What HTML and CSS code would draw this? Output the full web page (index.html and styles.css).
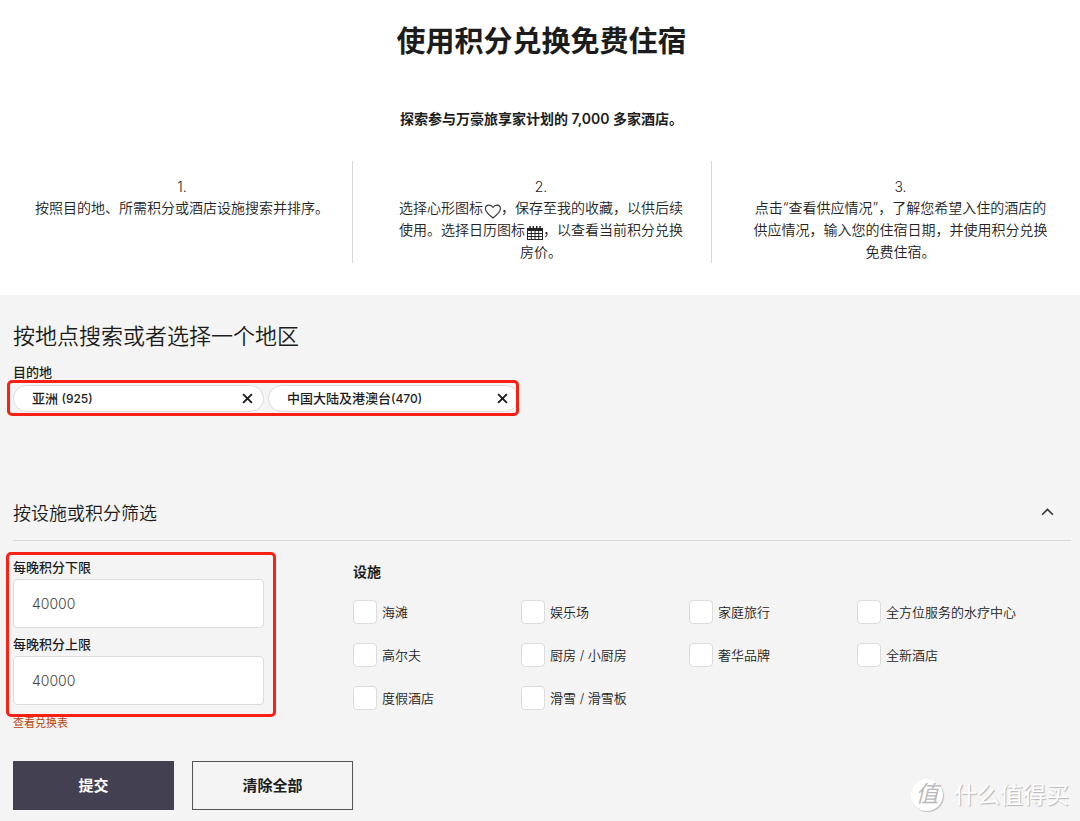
FILE: index.html
```html
<!DOCTYPE html>
<html lang="zh-CN">
<head>
<meta charset="utf-8">
<meta name="viewport" content="width=device-width, initial-scale=1">
<title>使用积分兑换免费住宿</title>
<link rel="stylesheet" href="styles.css">
</head>
<body>
<header class="intro">
  <h1 class="title">使用积分兑换免费住宿</h1>
  <p class="lead">探索参与万豪旅享家计划的 7,000 多家酒店。</p>
  <div class="steps">
    <div class="step">
      <div class="number">1.</div>
      <p>按照目的地、所需积分或酒店设施搜索并排序。</p>
    </div>
    <div class="step">
      <div class="number">2.</div>
      <p>选择心形图标<svg class="inline-icon" viewBox="0 0 18 16" aria-hidden="true"><path d="M10 15C6.600 12.100 2.400 9.200 2.400 5.700 2.400 3.600 4 2.100 6 2.100c1.700 0 3.200 1 4 2.500.8-1.500 2.300-2.500 4-2.500 2 0 3.400 1.500 3.400 3.600 0 3.500-4 6.400-7.400 9.300z" fill="none" stroke="#333" stroke-width="1.100" stroke-linejoin="round"/></svg>，保存至我的收藏，以供后续使用。选择日历图标<svg class="inline-icon" viewBox="0 0 18 16" aria-hidden="true"><path d="M2 3h16v12H2z" fill="#222"/><path d="M5 1v3M8.300 1v3M11.700 1v3M15 1v3" stroke="#222" stroke-width="1.500"/><path d="M3 6h2.800v2H3zM6.800 6h2.700v2H6.800zM10.500 6h2.700v2h-2.700zM14.200 6H17v2h-2.800zM3 9h2.800v2H3zM6.800 9h2.700v2H6.800zM10.500 9h2.700v2h-2.700zM14.200 9H17v2h-2.800zM3 12h2.800v2H3zM6.800 12h2.700v2H6.800zM10.500 12h2.700v2h-2.700zM14.200 12H17v2h-2.800z" fill="#fff"/></svg>，以查看当前积分兑换房价。</p>
    </div>
    <div class="step">
      <div class="number">3.</div>
      <p>点击“查看供应情况”，了解您希望入住的酒店的供应情况，输入您的住宿日期，并使用积分兑换免费住宿。</p>
    </div>
  </div>
</header>
<main class="search">
  <form class="form">
    <h2 class="region-title">按地点搜索或者选择一个地区</h2>
    <div class="label" id="destination">目的地</div>
    <div class="chips marked" role="group" aria-labelledby="destination">
      <div class="chip"><span>亚洲 <span class="count">(925)</span></span><button class="remove" type="button" aria-label="移除亚洲"><svg viewBox="0 0 10 10"><path d="M1 1l8 8M9 1L1 9"/></svg></button></div>
      <div class="chip"><span>中国大陆及港澳台<span class="count">(470)</span></span><button class="remove" type="button" aria-label="移除中国大陆及港澳台"><svg viewBox="0 0 10 10"><path d="M1 1l8 8M9 1L1 9"/></svg></button></div>
    </div>
    <div class="filter-head">
      <h2 class="filter-title">按设施或积分筛选</h2>
      <button class="toggle" type="button" aria-label="收起"><svg viewBox="0 0 12 8"><path d="M1 7l5-5 5 5"/></svg></button>
    </div>
    <div class="filters">
      <div class="points">
        <div class="fields marked">
          <label class="label" for="min">每晚积分下限</label>
          <input class="input" id="min" type="text" value="40000">
          <label class="label" for="max">每晚积分上限</label>
          <input class="input" id="max" type="text" value="40000">
        </div>
        <a class="chart-link" href="#">查看兑换表</a>
      </div>
      <fieldset class="amenities">
        <legend class="legend">设施</legend>
        <div class="options">
          <label class="option"><input type="checkbox">海滩</label>
          <label class="option"><input type="checkbox">娱乐场</label>
          <label class="option"><input type="checkbox">家庭旅行</label>
          <label class="option"><input type="checkbox">全方位服务的水疗中心</label>
          <label class="option"><input type="checkbox">高尔夫</label>
          <label class="option"><input type="checkbox">厨房 / 小厨房</label>
          <label class="option"><input type="checkbox">奢华品牌</label>
          <label class="option"><input type="checkbox">全新酒店</label>
          <label class="option"><input type="checkbox">度假酒店</label>
          <label class="option"><input type="checkbox">滑雪 / 滑雪板</label>
        </div>
      </fieldset>
    </div>
    <div class="actions">
      <button class="button primary" type="submit">提交</button>
      <button class="button" type="reset">清除全部</button>
    </div>
  </form>
  <div class="watermark"><span class="seal">值</span><span>什么值得买</span></div>
</main>
</body>
</html>
```
FILE: styles.css
```css
* { box-sizing: border-box; }
body {
  margin: 0;
  min-height: 100vh;
  display: flex;
  flex-direction: column;
  background: #fff;
  color: #1c1c1c;
  font: 350 14px/22px Inter, "Noto Sans CJK SC", sans-serif;
}
h1, h2, p { margin: 0; }
button, input { font: inherit; color: inherit; }

.intro { padding: 21px 9px 32px 12px; text-align: center; }
.title { font-size: 29px; line-height: 42px; font-weight: 700; }
.lead { margin-top: 45px; font-weight: 600; }
.steps {
  margin-top: 31px;
  display: grid;
  grid-template-columns: repeat(3, 1fr);
  column-gap: 18px;
}
.step { padding: 15px 22px 0; color: #222; }
.step:not(:last-child) { border-right: 1px solid #d8d8d8; }
.number { line-height: 21px; }
.inline-icon { width: 18px; height: 16px; vertical-align: -6px; }

.search { position: relative; flex: 1; background: #f4f4f4; }
.form { padding: 26px 9px 12px 13px; }
.region-title { font-size: 22px; line-height: 30px; font-weight: 350; }
.label { display: block; font-size: 13px; line-height: 20px; font-weight: 500; }
.form > .label { margin-top: 11px; }

/* Red frame that highlights a group of controls */
.marked { position: relative; }
.marked::after {
  content: "";
  position: absolute;
  inset: -5px -12px -12px -7px;
  border: 3px solid #fb2014;
  border-radius: 5px;
  pointer-events: none;
}
.chips { display: flex; gap: 4px; width: max-content; margin-top: 3px; }
.chips::after { inset: -5px 0 -4px -6px; }
.chip {
  width: 251px;
  height: 27px;
  padding: 0 10px 0 18px;
  display: flex;
  align-items: center;
  justify-content: space-between;
  background: #fff;
  border: 1px solid #dcdcdc;
  border-radius: 14px;
  font-size: 13px;
  font-weight: 500;
}
.count { font-size: 12px; }
.remove, .toggle { border: 0; padding: 0; background: none; display: flex; }
.remove svg { width: 11px; height: 11px; fill: none; stroke: #1c1c1c; stroke-width: 1.7; }

.filter-head {
  margin-top: 87px;
  padding: 0 17px 11px 0;
  display: flex;
  align-items: center;
  justify-content: space-between;
  border-bottom: 1px solid #d9d9d9;
}
.filter-title { font-size: 18px; line-height: 30px; font-weight: 350; }
.toggle { padding-bottom: 6px; }
.toggle svg { width: 13px; height: 9px; fill: none; stroke: #333; stroke-width: 1.5; }

.filters { display: grid; grid-template-columns: 251px 1fr; column-gap: 89px; padding-top: 16px; }
.input {
  display: block;
  width: 100%;
  height: 49px;
  margin: 2px 0 6px;
  padding: 0 18px;
  border: 1px solid #dcdcdc;
  border-radius: 4px;
  background: #fff;
  color: #444;
}
.chart-link {
  display: block;
  margin-top: 9px;
  font-size: 11px;
  line-height: 18px;
  font-weight: 400;
  color: #b8410f;
  text-decoration: none;
}
.amenities { margin: 0; padding: 4px 0 0; border: 0; min-width: 0; }
.legend { float: left; width: 100%; padding: 0; font-weight: 700; }
.options {
  clear: both;
  padding-top: 17px;
  display: grid;
  grid-template-columns: repeat(3, 168px) 1fr;
  row-gap: 19px;
}
.option { display: flex; align-items: center; gap: 5px; font-size: 13px; line-height: 24px; }
.option input {
  appearance: none;
  width: 24px;
  height: 24px;
  margin: 0;
  border: 1px solid #dcdcdc;
  border-radius: 4px;
  background: #fff;
}
.option input:checked { background: #434052; }

.actions { display: flex; gap: 18px; margin-top: 29px; }
.button {
  width: 161px;
  height: 49px;
  border: 1px solid #555;
  background: #f4f4f4;
  font-size: 15px;
  font-weight: 600;
}
.primary { background: #434052; border-color: #434052; color: #fff; }

.watermark {
  position: absolute;
  right: 11px;
  bottom: 10px;
  display: flex;
  align-items: center;
  gap: 11px;
  color: #fff;
  font-size: 23px;
  line-height: 34px;
  font-weight: 400;
  text-shadow: 1px 1px 1px #b4b4b4;
}
.seal {
  width: 32px;
  height: 32px;
  border-radius: 50%;
  background: #fff;
  box-shadow: 1px 1px 1px #bbb;
  color: #bbb;
  text-align: center;
  line-height: 30px;
  font-style: italic;
  text-shadow: none;
}
```
